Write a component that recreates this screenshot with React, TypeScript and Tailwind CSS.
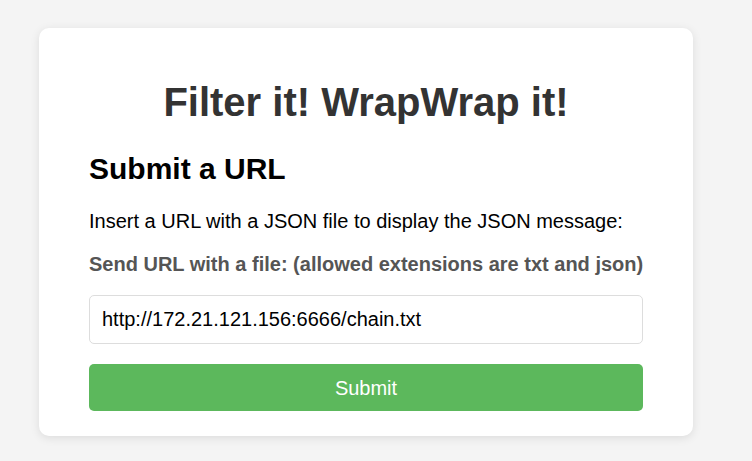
export default function App() {
  return (
    <div
      className="min-h-[461px] bg-[#f4f4f4] pt-[28px] pl-[39px]"
      style={{ fontFamily: '"Liberation Sans", Arial, sans-serif' }}
    >
      <div className="w-[654px] rounded-[10px] bg-white px-[50px] pt-[51px] pb-[25px] shadow-[0_2px_10px_rgba(0,0,0,0.1)]">
        <h1 className="text-center text-[40px] leading-[46px] font-bold text-[#333]">
          Filter it! WrapWrap it!
        </h1>
        <h2 className="mt-[27px] text-[30px] leading-[34px] font-bold text-black">Submit a URL</h2>
        <p className="mt-[24px] text-[20px] leading-[23px] text-black">
          Insert a URL with a JSON file to display the JSON message:
        </p>
        <form className="flex flex-col" onSubmit={(e) => e.preventDefault()}>
          <label className="mt-[20px] whitespace-nowrap text-[20px] leading-[23px] font-bold text-[#555]">
            Send URL with a file: (allowed extensions are txt and json)
          </label>
          <input
            type="text"
            defaultValue="http://172.21.121.156:6666/chain.txt"
            className="mt-[19px] h-[49px] w-full rounded-[5px] border border-[#ddd] px-[12px] text-[20px] text-black outline-none"
          />
          <button
            type="submit"
            className="mt-[20px] h-[47px] w-full rounded-[5px] bg-[#5cb85c] text-[20px] text-white"
          >
            Submit
          </button>
        </form>
      </div>
    </div>
  );
}
